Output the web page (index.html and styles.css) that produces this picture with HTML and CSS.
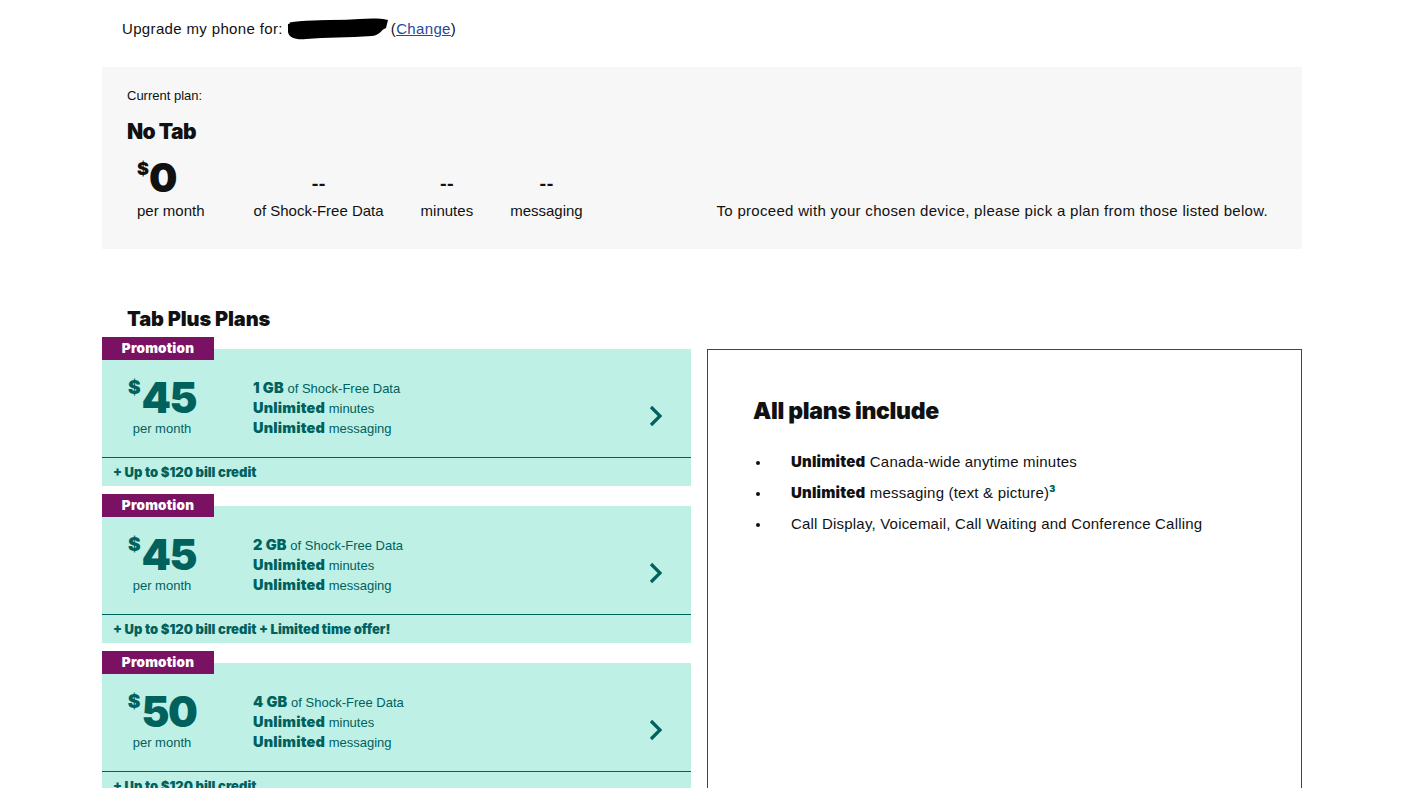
FILE: index.html
```html
<!DOCTYPE html>
<html lang="en">
<head>
<meta charset="utf-8">
<title>Upgrade my phone</title>
<link rel="stylesheet" href="styles.css">
</head>
<body>
<div class="page">
  <div class="upgrade-line">
    <span>Upgrade my phone for:</span>
    <svg class="redact" width="104" height="24" viewBox="0 0 104 24"><path d="M2 7 C20 2 40 5 60 3 C75 2 90 0 102 3 L100 11 C94 13 95 18 86 19 C62 21 40 20 20 22 C10 23 3 21 2 15 Z" fill="#000"/><path d="M4 8 C30 4 60 6 98 5" stroke="#000" stroke-width="5" fill="none"/></svg>
    <span>(<a href="#" class="change">Change</a>)</span>
  </div>

  <section class="current">
    <div class="current-label">Current plan:</div>
    <h2 class="current-name">No Tab</h2>
    <div class="stats">
      <div class="stat stat-price">
        <div class="stat-value"><sup class="dollar">$</sup><span class="big">0</span></div>
        <div class="stat-label">per month</div>
      </div>
      <div class="stat">
        <div class="stat-value dash">--</div>
        <div class="stat-label">of Shock-Free Data</div>
      </div>
      <div class="stat">
        <div class="stat-value dash">--</div>
        <div class="stat-label">minutes</div>
      </div>
      <div class="stat">
        <div class="stat-value dash">--</div>
        <div class="stat-label">messaging</div>
      </div>
      <div class="proceed">To proceed with your chosen device, please pick a plan from those listed below.</div>
    </div>
  </section>

  <h2 class="section-title">Tab Plus Plans</h2>

  <div class="plans-layout">
    <div class="plans">
      <div class="plan">
        <div class="promo">Promotion</div>
        <div class="plan-card">
          <div class="plan-main">
            <div class="price">
              <div class="price-value"><sup class="p-dollar">$</sup><span class="p-num">45</span></div>
              <div class="price-label">per month</div>
            </div>
            <ul class="features">
              <li><b>1 GB</b> of Shock-Free Data</li>
              <li><b>Unlimited</b> minutes</li>
              <li><b>Unlimited</b> messaging</li>
            </ul>
            <svg class="chev" width="16" height="22" viewBox="0 0 16 22"><path d="M3 2 L12 11 L3 20" stroke="#00615d" stroke-width="3.2" fill="none"/></svg>
          </div>
          <div class="plan-foot">+ Up to $120 bill credit</div>
        </div>
      </div>

      <div class="plan">
        <div class="promo">Promotion</div>
        <div class="plan-card">
          <div class="plan-main">
            <div class="price">
              <div class="price-value"><sup class="p-dollar">$</sup><span class="p-num">45</span></div>
              <div class="price-label">per month</div>
            </div>
            <ul class="features">
              <li><b>2 GB</b> of Shock-Free Data</li>
              <li><b>Unlimited</b> minutes</li>
              <li><b>Unlimited</b> messaging</li>
            </ul>
            <svg class="chev" width="16" height="22" viewBox="0 0 16 22"><path d="M3 2 L12 11 L3 20" stroke="#00615d" stroke-width="3.2" fill="none"/></svg>
          </div>
          <div class="plan-foot">+ Up to $120 bill credit + Limited time offer!</div>
        </div>
      </div>

      <div class="plan">
        <div class="promo">Promotion</div>
        <div class="plan-card">
          <div class="plan-main">
            <div class="price">
              <div class="price-value"><sup class="p-dollar">$</sup><span class="p-num">50</span></div>
              <div class="price-label">per month</div>
            </div>
            <ul class="features">
              <li><b>4 GB</b> of Shock-Free Data</li>
              <li><b>Unlimited</b> minutes</li>
              <li><b>Unlimited</b> messaging</li>
            </ul>
            <svg class="chev" width="16" height="22" viewBox="0 0 16 22"><path d="M3 2 L12 11 L3 20" stroke="#00615d" stroke-width="3.2" fill="none"/></svg>
          </div>
          <div class="plan-foot">+ Up to $120 bill credit</div>
        </div>
      </div>
    </div>

    <aside class="includes">
      <h3 class="includes-title">All plans include</h3>
      <ul class="includes-list">
        <li><b>Unlimited</b> Canada-wide anytime minutes</li>
        <li><b>Unlimited</b> messaging (text &amp; picture)<sup class="fn">3</sup></li>
        <li>Call Display, Voicemail, Call Waiting and Conference Calling</li>
      </ul>
    </aside>
  </div>
</div>
</body>
</html>
```

FILE: styles.css
```css
html, body {
  margin: 0;
  padding: 0;
  background: #fff;
}
body {
  font-family: "Liberation Sans", Arial, sans-serif;
  color: #111;
  font-size: 15px;
}
.current-name, .section-title, .includes-title, .big, .dollar, .dash,
.p-num, .p-dollar, .promo, .plan-foot, .features b, .includes-list b, .fn {
  font-family: "Inter", "Liberation Sans", sans-serif;
  font-weight: 900;
}
.page {
  width: 1200px;
  margin-left: 102px;
}
.upgrade-line {
  display: flex;
  align-items: center;
  padding: 17px 0 0 20px;
  height: 22px;
  font-size: 15px;
  letter-spacing: 0.35px;
}
.redact {
  margin: 2px 1px 0 3px;
}
.change {
  color: #1f4a9a;
  text-decoration: underline;
}

.current {
  margin-top: 28px;
  background: #f7f7f7;
  height: 182px;
  box-sizing: border-box;
  padding: 20px 34px 0 25px;
}
.current-label {
  font-size: 13px;
  line-height: 17px;
}
.current-name {
  margin: 15px 0 0;
  font-size: 21px;
  line-height: 26px;
  letter-spacing: -0.6px;
}
.stats {
  display: flex;
  align-items: flex-end;
  margin-top: 12px;
}
.stat {
  display: flex;
  flex-direction: column;
  align-items: center;
  margin-right: 37px;
}
.stat-price {
  align-items: flex-start;
  padding-left: 10px;
  margin-right: 49px;
}
.stat-value {
  height: 40px;
  display: flex;
  align-items: flex-end;
  line-height: 1;
}
.dollar {
  font-size: 18px;
  align-self: flex-start;
  margin-top: 3px;
  vertical-align: top;
}
.big {
  font-size: 40px;
  line-height: 38px;
  letter-spacing: -1px;
}
.dash {
  font-size: 15px;
  align-items: center;
  padding-top: 13px;
  box-sizing: border-box;
}
.stat-label {
  font-size: 15px;
  line-height: 20px;
  margin-top: 4px;
}
.proceed {
  margin-left: auto;
  font-size: 15px;
  line-height: 20px;
  letter-spacing: 0.3px;
}

.section-title {
  margin: 58px 0 0 25px;
  font-size: 20px;
  line-height: 24px;
  letter-spacing: -0.1px;
}

.plans-layout {
  display: flex;
  gap: 16px;
  margin-top: 6px;
}
.plans {
  width: 589px;
  flex: none;
}
.plan {
  margin-bottom: 8px;
}
.promo {
  position: relative;
  z-index: 1;
  width: 112px;
  height: 23px;
  background: #7b1163;
  color: #fff;
  font-size: 13.5px;
  line-height: 23px;
  text-align: center;
  letter-spacing: 0.2px;
  margin-bottom: -11px;
}
.plan-card {
  background: #bff0e6;
  color: #00615d;
}
.plan-main {
  height: 109px;
  display: flex;
  align-items: center;
  border-bottom: 1px solid #00615d;
  box-sizing: border-box;
  padding-top: 8px;
}
.price {
  width: 100px;
  margin-left: 10px;
  display: flex;
  flex-direction: column;
  align-items: center;
}
.price-value {
  display: flex;
  line-height: 1;
  height: 40px;
  align-items: flex-end;
}
.p-dollar {
  font-size: 19px;
  align-self: flex-start;
  margin-top: 0px;
  margin-right: 1px;
}
.p-num {
  font-size: 42px;
  line-height: 40px;
  letter-spacing: -1.5px;
}
.price-label {
  font-size: 13px;
  line-height: 16px;
  margin-top: 3px;
}
.features {
  list-style: none;
  margin: 0 0 0 41px;
  padding: 0;
  font-size: 13px;
  line-height: 20px;
  margin-top: 2px;
}
.features li {
  height: 20px;
}
.features b {
  font-size: 14.5px;
  line-height: 20px;
  letter-spacing: 0.2px;
}
.chev {
  margin-left: auto;
  margin-right: 27px;
  margin-top: 18px;
}
.plan-foot {
  height: 28px;
  line-height: 28px;
  padding-left: 11px;
  font-size: 13px;
  letter-spacing: 0;
}

.includes {
  flex: 1;
  border: 1px solid #00615d;
  margin-top: 12px;
  height: 520px;
  box-sizing: border-box;
  padding: 48px 0 0 45px;
}
.includes-title {
  margin: 0;
  font-size: 23px;
  line-height: 26px;
  letter-spacing: -0.3px;
}
.includes-list {
  margin: 28px 0 0;
  padding: 0;
  list-style: none;
  font-size: 15px;
  letter-spacing: 0.2px;
}
.includes-list li {
  position: relative;
  padding-left: 38px;
  line-height: 20px;
  margin-bottom: 11px;
}
.includes-list li::before {
  content: "";
  position: absolute;
  left: 3px;
  top: 9px;
  width: 4px;
  height: 4px;
  border-radius: 50%;
  background: #111;
}
.includes-list b {
  letter-spacing: 0.2px;
}
.fn {
  font-size: 9px;
  color: #00615d;
  line-height: 0;
}
```
